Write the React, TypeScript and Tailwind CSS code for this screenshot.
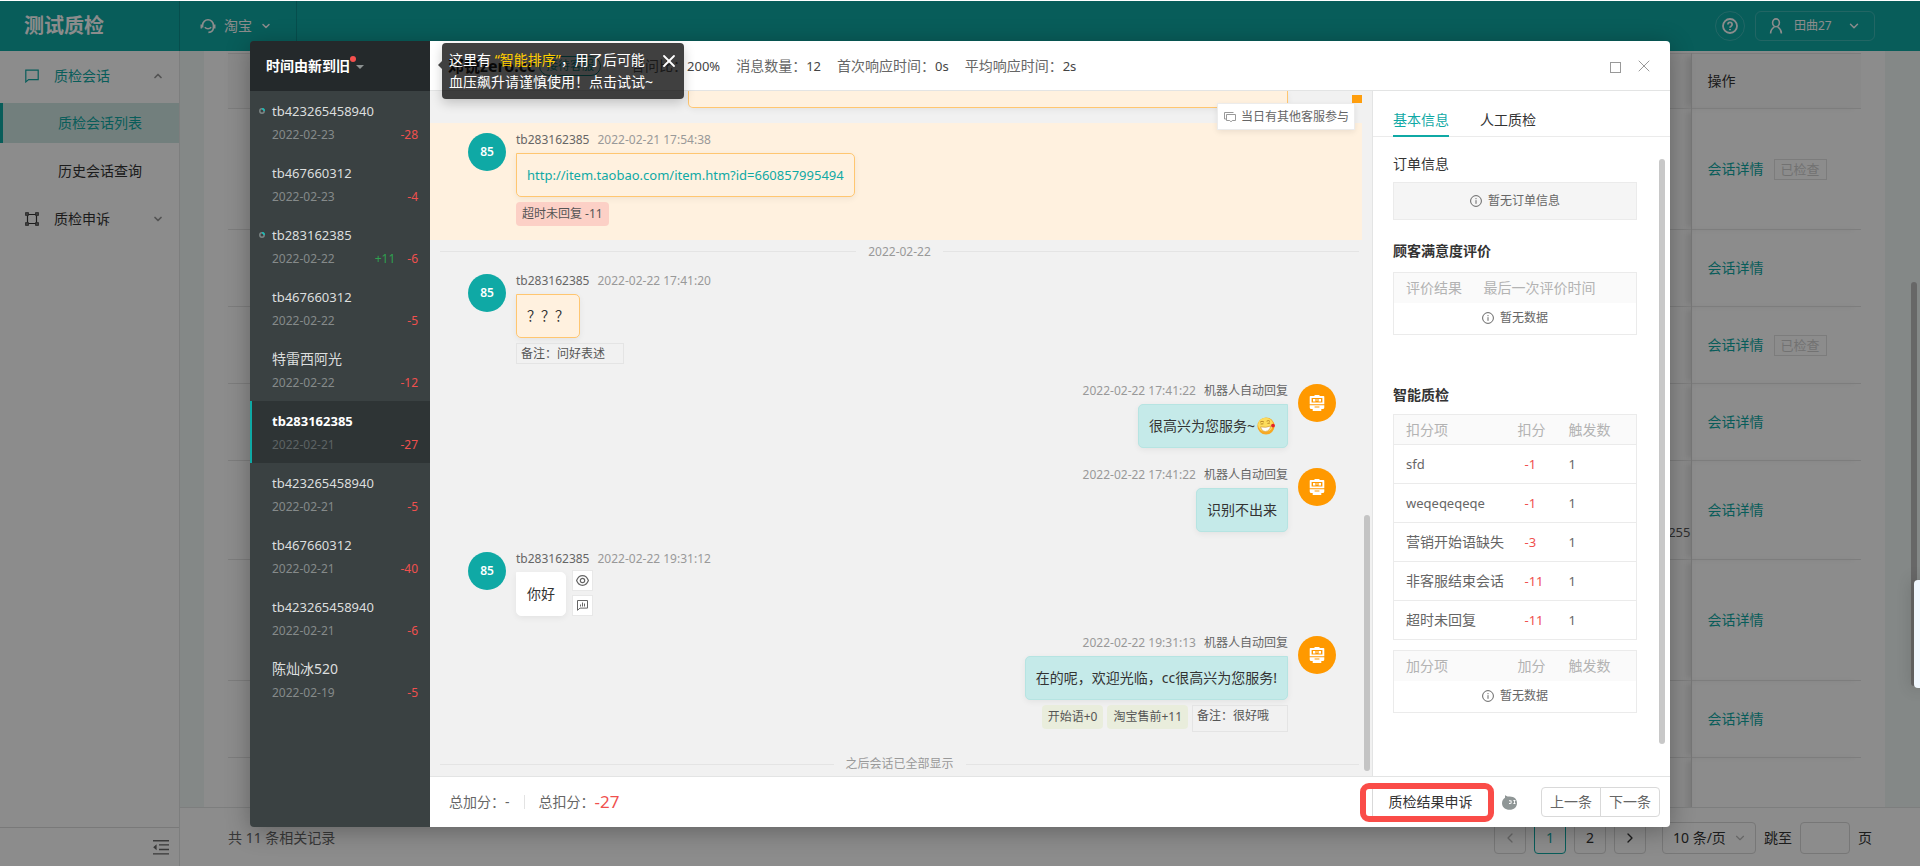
import React from "react";
import { ChevronDown, ChevronUp, ChevronLeft, ChevronRight, X } from "lucide-react";

type Session = { name: string; date: string; minus: string; plus?: string; dot?: boolean; active?: boolean };

const sessions: Session[] = [
  { name: "tb423265458940", date: "2022-02-23", minus: "-28", dot: true },
  { name: "tb467660312", date: "2022-02-23", minus: "-4" },
  { name: "tb283162385", date: "2022-02-22", minus: "-6", plus: "+11", dot: true },
  { name: "tb467660312", date: "2022-02-22", minus: "-5" },
  { name: "特雷西阿光", date: "2022-02-22", minus: "-12" },
  { name: "tb283162385", date: "2022-02-21", minus: "-27", active: true },
  { name: "tb423265458940", date: "2022-02-21", minus: "-5" },
  { name: "tb467660312", date: "2022-02-21", minus: "-40" },
  { name: "tb423265458940", date: "2022-02-21", minus: "-6" },
  { name: "陈灿冰520", date: "2022-02-19", minus: "-5" },
];

const rows = [
  { h: "h-[121px]", checked: true },
  { h: "h-[77px]" },
  { h: "h-[77px]", checked: true },
  { h: "h-[77px]" },
  { h: "h-[99px]", value: "255" },
  { h: "h-[121px]" },
  { h: "h-[77px]" },
  { h: "h-[77px]", empty: true },
];

const deductions = [
  ["sfd", "-1", "1"],
  ["weqeqeqeqe", "-1", "1"],
  ["营销开始语缺失", "-3", "1"],
  ["非客服结束会话", "-11", "1"],
  ["超时未回复", "-11", "1"],
];

function HeadsetIcon() {
  return (
    <svg className="size-4" viewBox="0 0 16 16" fill="none" stroke="currentColor" strokeWidth="1.6">
      <path d="M2.6 9.5V7.2a5.4 5.4 0 0 1 10.8 0v2.3c0 2.6-1.8 4.6-5 4.9" />
      <path d="M1.3 6.5v4M14.7 6.5v4M4.8 9.2c1.8 2 4.6 2 6.4 0" />
    </svg>
  );
}

function ChatIcon() {
  return (
    <svg className="size-[14px]" viewBox="0 0 14 14" fill="none" stroke="currentColor" strokeWidth="1.2">
      <path d="M.8 1.2h12.4v9.4H3.6L.8 12.9z" />
    </svg>
  );
}

function FrameIcon() {
  return (
    <svg className="size-[14px]" viewBox="0 0 14 14" fill="none" stroke="currentColor" strokeWidth="1.2">
      <path d="M2.5 3.5v7M11.5 3.5v7M3.5 2.5h7M3.5 11.5h7" />
      <path d="M.8.8h2.4v2.4H.8zM10.8.8h2.4v2.4h-2.4zM.8 10.8h2.4v2.4H.8zM10.8 10.8h2.4v2.4h-2.4z" />
    </svg>
  );
}

function HelpIcon() {
  return (
    <svg className="size-4" viewBox="0 0 16 16" fill="none" stroke="currentColor" strokeWidth="1.8">
      <circle cx="8" cy="8" r="7" />
      <path d="M5.9 6.4a2.1 2.1 0 1 1 3.2 1.8c-.8.5-1.1.8-1.1 1.5M8 10.9v1.4" />
    </svg>
  );
}

function UserIcon() {
  return (
    <svg className="h-4 w-[14px]" viewBox="0 0 14 16" fill="none" stroke="currentColor" strokeWidth="1.6">
      <ellipse cx="7" cy="4.8" rx="3.4" ry="3.9" />
      <path d="M1.6 15.4c0-3.4 1.6-5.2 3.8-6.6M12.4 15.4c0-3.4-1.6-5.2-3.8-6.6" />
    </svg>
  );
}

function CollapseIcon() {
  return (
    <svg className="h-[15px] w-4" viewBox="0 0 16 15" fill="currentColor">
      <path d="M0 0h16v1.4H0zM6 4.2h10v1.4H6zM6 8.8h10v1.4H6zM0 13.2h16v1.4H0zM3.6 4.2v6L.2 7.2z" />
    </svg>
  );
}

function InfoIcon() {
  return (
    <svg className="size-3" viewBox="0 0 12 12" fill="none" stroke="currentColor">
      <circle cx="6" cy="6" r="5.4" />
      <path d="M6 5.2v3.6M6 3.1v1.1" />
    </svg>
  );
}

function RobotIcon() {
  return (
    <svg className="h-4 w-4" viewBox="0 0 16 16" fill="#fff">
      <path d="M5.5 0h5v1h-5z" />
      <path fillRule="evenodd" d="M1.5 1h13a.8.8 0 0 1 .8.8v7.4H.7V1.8a.8.8 0 0 1 .8-.8zM2.6 3v4.6h10.8V3z" />
      <path d="M4 4h2.4v2.4H4zM9.6 4H12v2.4H9.6zM7.2 4.6h1.6v1H7.2z" />
      <path fillRule="evenodd" d="M.7 10.2h14.6v2.2a1.6 1.6 0 0 1-1.6 1.6h-1.4v2H3.7v-2H2.3a1.6 1.6 0 0 1-1.6-1.6zM5.6 11.4v1h4.8v-1z" />
    </svg>
  );
}

function LaughEmoji() {
  return (
    <svg className="mx-[2px] size-[18px]" viewBox="0 0 18 18">
      <circle cx="9" cy="9" r="8.6" fill="#f7a823" />
      <ellipse cx="8.6" cy="7.8" rx="7.6" ry="7" fill="#fcdc5c" />
      <path d="M3 5.2q2-1.8 4-.2M9.6 4.2q1.8-1.4 3.4.2M3.6 7l2.8-.2M10.4 6.4l2.6-.4" stroke="#a8721c" strokeWidth=".8" fill="none" />
      <path d="M3.6 9.8q5.4 1.4 10-.8-.6 5-5 5.4-3.8.2-5-4.6z" fill="#fff" stroke="#c98a2a" strokeWidth=".6" />
      <circle cx="16" cy="8.6" r="1.9" fill="#e2232b" />
    </svg>
  );
}

function TomatoIcon() {
  return (
    <svg className="size-[15px]" viewBox="0 0 15 15">
      <path d="M3 0c1.4 1.2 2.6 1.7 4.4 1.4C12 1.2 15 4 15 8c0 4-3 6.8-7.4 6.8S0 12 0 8.2C0 5.8 1.2 3.8 3 2.8z" fill="#8f9696" />
      <path d="M7 5.2h1.600v1H7zM7 8h1.600v1H7zM8.600 5.600h1v3h-1zM11.400 5h2v1h-2zM11.400 8h2v1h-2zM12 5.600h.9v3H12z" fill="#fff" />
    </svg>
  );
}

function StateRing() {
  return (
    <svg className="absolute -left-[13px] top-[8px] size-[6px]" viewBox="0 0 6 6" fill="none" strokeWidth="1.5">
      <circle cx="3" cy="3" r="2.2" stroke="#7c8585" />
      <path d="M3 .8A2.2 2.2 0 0 1 5.2 3" stroke="#14c0ba" />
    </svg>
  );
}

function ShellHeader() {
  return (
    <header className="flex h-[51px] shrink-0 items-stretch border-t border-white bg-[#0fa9a5] text-white">
      <h1 className="flex w-[180px] items-center border-r border-black/15 pl-6 text-[20px] font-bold">测试质检</h1>
      <button className="flex items-center gap-2 border-r border-black/15 pl-5 pr-6 text-sm">
        <HeadsetIcon />
        <span>淘宝</span>
        <ChevronDown className="size-3" strokeWidth={3} />
      </button>
      <div className="ml-auto flex items-center gap-[10px] pr-[45px]">
        <button aria-label="帮助" className="flex size-[30px] items-center justify-center rounded-full border border-white/20">
          <HelpIcon />
        </button>
        <button className="flex h-[30px] w-[120px] items-center rounded-md border border-white/20 px-[13px] text-xs">
          <UserIcon />
          <span className="ml-[11px]">田曲27</span>
          <ChevronDown className="ml-auto size-[14px]" strokeWidth={2.5} />
        </button>
      </div>
    </header>
  );
}

function ShellNav() {
  return (
    <aside className="flex w-[180px] shrink-0 flex-col border-r border-[#e3e6e6] bg-white text-sm">
      <nav className="flex-1">
        <a href="#chat" className="flex h-[50px] items-center pl-[25px] pr-[15px] text-[#0fa9a5]">
          <ChatIcon />
          <span className="ml-[15px] flex-1">质检会话</span>
          <ChevronUp className="size-3 text-[#999]" strokeWidth={3.5} />
        </a>
        <a href="#list" className="mt-[2px] flex h-10 items-center border-l-[3px] border-[#0fa9a5] bg-[#cfe8e4] pl-[55px] text-[#0fa9a5]">
          质检会话列表
        </a>
        <a href="#history" className="mt-2 flex h-10 items-center pl-[58px] text-[#333]">历史会话查询</a>
        <a href="#appeal" className="mt-[3px] flex h-[50px] items-center pl-[25px] pr-[15px] text-[#333]">
          <FrameIcon />
          <span className="ml-[15px] flex-1">质检申诉</span>
          <ChevronDown className="size-3 text-[#999]" strokeWidth={3.5} />
        </a>
      </nav>
      <button aria-label="收起菜单" className="flex h-[39px] items-center justify-end border-t border-[#dcdcdc] pr-[10px] text-[#666]">
        <CollapseIcon />
      </button>
    </aside>
  );
}

function ShellTable() {
  return (
    <div className="min-h-0 flex-1 overflow-hidden bg-[#f1f7f6] pl-6 pr-[35px]">
      <div className="h-full bg-white pl-6 pr-6 pt-[2px]">
        <table className="w-full table-fixed border-collapse text-sm">
          <thead>
            <tr className="h-[55px] border-y border-[#e4e4e4] bg-[#fafafa]">
              <th aria-label="内容" />
              <th className="w-[170px] border-l border-[#d8d8d8] pl-4 text-left font-normal text-[#333] shadow-[-6px_0_6px_-2px_rgba(0,0,0,0.12)]">操作</th>
            </tr>
          </thead>
          <tbody>
            {rows.map((r, i) => (
              <tr key={i} className={`${r.h} border-b border-[#e4e4e4]`}>
                <td className="pt-[44px] text-right text-[13px] text-[#555]">{r.value}</td>
                <td className="border-l border-[#d8d8d8] pl-4 shadow-[-6px_0_6px_-2px_rgba(0,0,0,0.12)]">
                  {!r.empty && (
                    <div className="flex items-center gap-[10px]">
                      <a href="#detail" className="text-[#0fa9a5]">会话详情</a>
                      {r.checked && (
                        <span className="flex h-[21px] w-[53px] items-center justify-center border border-[#e2e2e2] text-[13px] text-[#d0d0d0]">已检查</span>
                      )}
                    </div>
                  )}
                </td>
              </tr>
            ))}
          </tbody>
        </table>
      </div>
    </div>
  );
}

function ShellFooter() {
  const box = "flex size-8 items-center justify-center rounded-sm border";
  return (
    <footer className="flex h-[59px] shrink-0 items-center border-t border-[#e3e6e6] bg-white pl-12 pr-[48px] pt-[2px] text-sm text-[#333]">
      <span className="text-[#666]">共 11 条相关记录</span>
      <div className="ml-auto flex items-center gap-2">
        <button aria-label="上一页" className={`${box} border-[#d9d9d9] text-[#bbb]`}><ChevronLeft className="size-4" strokeWidth={2} /></button>
        <button className={`${box} border-[#0fa9a5] text-[#0fa9a5]`}>1</button>
        <button className={`${box} border-[#d9d9d9]`}>2</button>
        <button aria-label="下一页" className={`${box} border-[#d9d9d9]`}><ChevronRight className="size-4" strokeWidth={2} /></button>
        <span className="relative ml-2">
          <select aria-label="每页条数" className="h-8 w-[94px] appearance-none rounded-sm border border-[#d9d9d9] bg-white pl-[10px]">
            <option>10 条/页</option>
          </select>
          <ChevronDown className="absolute right-[9px] top-[9px] size-[14px] text-[#bbb]" />
        </span>
        <label className="flex items-center gap-2">
          跳至
          <input className="h-8 w-[50px] rounded-sm border border-[#d9d9d9] bg-white" />
          <span>页</span>
        </label>
      </div>
    </footer>
  );
}

function SessionList() {
  return (
    <section className="w-[180px] shrink-0 bg-[#3a4142]">
      <button className="relative flex h-[50px] w-full items-center bg-[#24292b] pl-4 text-sm font-bold text-white">
        时间由新到旧
        <span className="absolute left-[100px] top-[15px] size-[6px] rounded-full bg-[#f5504e]" />
        <span className="ml-[6px] mt-px border-x-4 border-t-4 border-x-transparent border-t-[#8c9191]" />
      </button>
      <ul>
        {sessions.map((s, i) => (
          <li
            key={i}
            className={
              s.active
                ? "h-[62px] border-l-2 border-[#0fa9a5] bg-[#2e3435] pl-5 pr-3 pt-[9px]"
                : "h-[62px] pl-[22px] pr-3 pt-[9px]"
            }
          >
            <div
              className={`relative leading-[22px] ${s.name.startsWith("tb") ? "text-[13px]" : "text-sm"} ${s.active ? "font-bold text-white" : "text-[#dcdede]"}`}
            >
              {s.dot && <StateRing />}
              {s.name}
            </div>
            <div className="mt-1 flex gap-3 text-xs leading-[18px]">
              <span className={`flex-1 ${s.active ? "text-[#5d6364]" : "text-[#858a8a]"}`}>{s.date}</span>
              {s.plus && <span className="text-[#2fa04f]">{s.plus}</span>}
              <span className="text-[#f0504e]">{s.minus}</span>
            </div>
          </li>
        ))}
      </ul>
    </section>
  );
}

function DialogHeader() {
  return (
    <div className="relative flex h-[50px] shrink-0 items-center border-b border-[#e3e4e4] bg-white pl-[18px] pr-4 text-sm text-[#666]">
      <h2 className="w-[91px] text-base font-bold text-[#222]">邓锐zero.cc</h2>
      <span className="flex h-[20px] items-center rounded-full border border-[#0fa9a5] px-[6px] text-xs text-[#0fa9a5]">接待客服</span>
      <dl className="ml-[30px] flex gap-4">
        {[["答问比：", "200%"], ["消息数量：", "12"], ["首次响应时间：", "0s"], ["平均响应时间：", "2s"]].map(([k, v]) => (
          <div key={k} className="flex">
            <dt>{k}</dt>
            <dd className="text-[13px] leading-5 text-[#444]">{v}</dd>
          </div>
        ))}
      </dl>
      <div className="ml-auto flex items-center gap-[13px] text-[#999]">
        <button aria-label="最大化" className="mt-[3px] size-[11px] border border-[#999]" />
        <button aria-label="关闭"><X className="size-5" strokeWidth={1.2} /></button>
      </div>
      <div role="tooltip" className="absolute left-3 top-[2px] z-10 flex h-14 w-[242px] items-start rounded-sm bg-black/75 px-[7px] pt-[6px] text-sm leading-[22px] text-white shadow-[0_4px_12px_rgba(0,0,0,0.2)]">
        <span className="absolute -left-1 top-[18px] border-y-4 border-r-4 border-y-transparent border-r-[#404040]" />
        <p className="whitespace-nowrap">
          这里有 <span className="text-[#ffcc00]">“智能排序”</span>，用了后可能
          <br />
          血压飙升请谨慎使用！点击试试~
        </p>
        <button aria-label="关闭提示" className="absolute right-[5px] top-[8px]"><X className="size-5" strokeWidth={2.2} /></button>
      </div>
    </div>
  );
}

type MessageProps = {
  right?: boolean;
  time: string;
  tone: "warn" | "plain" | "robot";
  children: React.ReactNode;
  side?: React.ReactNode;
  tags?: React.ReactNode;
};

const tones = {
  warn: "rounded-tl-none border-[#ffc670] bg-[#fff1df]",
  plain: "rounded-tl-none border-white bg-white",
  robot: "rounded-tr-none border-[#b6e4e2] bg-[#c5eae9]",
};

function Message({ right, time, tone, children, side, tags }: MessageProps) {
  return (
    <article className={right ? "flex flex-row-reverse gap-[10px] pr-[26px]" : "flex gap-[10px] pl-[38px]"}>
      <div className={`flex size-[38px] shrink-0 items-center justify-center rounded-full text-xs font-semibold text-white ${right ? "bg-[#ff9900]" : "bg-[#0fa9a5]"}`}>
        {right ? <RobotIcon /> : "85"}
      </div>
      <div className={right ? "flex flex-col items-end" : "flex flex-col items-start"}>
        <div className={`flex h-5 gap-2 text-xs leading-[14px] text-[#666] ${right ? "flex-row-reverse" : ""}`}>
          <span>{right ? "机器人自动回复" : "tb283162385"}</span>
          <time className="text-[#999]">{time}</time>
        </div>
        <div className="flex h-11 gap-[6px]">
          <div className={`flex h-11 items-center rounded-[5px] border px-[10px] text-sm text-[#333] shadow-[0_2px_6px_rgba(0,0,0,0.06)] ${tones[tone]}`}>
            {children}
          </div>
          {side}
        </div>
        {tags && <div className="mt-[5px] flex gap-1 text-xs text-[#555]">{tags}</div>}
      </div>
    </article>
  );
}

function Divider({ children }: { children: React.ReactNode }) {
  return (
    <div className="flex h-6 items-center gap-3 pl-[10px] pr-[3px] text-xs text-[#999]">
      <span className="h-px flex-1 bg-[#e4e4e4]" />
      {children}
      <span className="h-px flex-1 bg-[#e4e4e4]" />
    </div>
  );
}

function ChatPane() {
  const tool = "flex size-[21px] items-center justify-center border border-[#e8e8e8] bg-white text-[#666]";
  return (
    <section className="relative flex min-w-0 flex-1 flex-col overflow-hidden bg-[#f1f1f1] pr-[10px]">
      <div className="ml-[258px] mr-[74px] h-[17px] shrink-0 rounded-b-[5px] border border-t-0 border-[#ffc670] bg-[#fff1df] shadow-[0_2px_6px_rgba(0,0,0,0.06)]" />
      <div className="mt-[15px] bg-[#fff1df] pb-[14px] pt-[10px]">
        <Message
          time="2022-02-21 17:54:38"
          tone="warn"
          tags={<span className="flex h-6 items-center rounded-sm bg-[#fcd0c6] px-[6px]">超时未回复 -11</span>}
        >
          <a href="#item" className="text-[13px] text-[#0fa9a5]">http://item.taobao.com/item.htm?id=660857995494</a>
        </Message>
      </div>
      <Divider>2022-02-22</Divider>
      <div className="flex flex-col gap-5 pb-[21px] pt-[10px]">
        <Message
          time="2022-02-22 17:41:20"
          tone="warn"
          tags={<span className="h-[21px] w-[108px] border border-[#e4e4e4] pl-1 leading-5">备注：问好表述</span>}
        >
          ？？？
        </Message>
        <Message right time="2022-02-22 17:41:22" tone="robot">
          <span>很高兴为您服务~</span>
          <LaughEmoji />
        </Message>
        <Message right time="2022-02-22 17:41:22" tone="robot">识别不出来</Message>
        <Message
          time="2022-02-22 19:31:12"
          tone="plain"
          side={
            <div className="-mt-[2px] flex flex-col gap-1">
              <button aria-label="查看" className={tool}>
                <svg className="h-[11px] w-[13px]" viewBox="0 0 13 11" fill="none" stroke="currentColor" strokeWidth="1.2">
                  <path d="M.6 5.5C2 2 4 .7 6.5.7S11 2 12.4 5.5C11 9 9 10.3 6.5 10.3S2 9 .6 5.5z" />
                  <circle cx="6.5" cy="5.5" r="2.2" />
                </svg>
              </button>
              <button aria-label="备注" className={tool}>
                <svg className="h-[11px] w-[11px]" viewBox="0 0 11 11" fill="none" stroke="currentColor">
                  <path d="M.5.5h10v7.600H3L.5 10.300zM3.500 4.500v2M5.500 2.500v4M7.500 3.500v3" />
                </svg>
              </button>
            </div>
          }
        >
          你好
        </Message>
        <Message
          right
          time="2022-02-22 19:31:13"
          tone="robot"
          tags={
            <>
              <span className="flex h-6 items-center rounded-sm bg-[#e9eddc] px-[6px]">开始语+0</span>
              <span className="flex h-6 items-center rounded-sm bg-[#e9eddc] px-[6px]">淘宝售前+11</span>
              <span className="h-[27px] w-24 border border-[#e4e4e4] pl-1 leading-5">备注：很好哦</span>
            </>
          }
        >
          在的呢，欢迎光临，cc很高兴为您服务!
        </Message>
      </div>
      <Divider>之后会话已全部显示</Divider>
      <span className="absolute right-[10px] top-1 h-2 w-[10px] bg-[#ff9e0d]" />
      <button className="absolute right-[17px] top-[12px] flex h-[27px] items-center gap-[5px] border border-[#ececec] bg-white pl-[6px] pr-[5px] text-xs text-[#666] shadow-[0_2px_6px_rgba(0,0,0,0.08)]">
        <svg className="size-3" viewBox="0 0 12 12" fill="none" stroke="#999">
          <path d="M2.5 8H.5V1.5h9" />
          <path d="M2.5 3.5h9V9.5H8.2L7 10.9 5.8 9.5H2.5z" />
        </svg>
        当日有其他客服参与
      </button>
      <span className="absolute bottom-[5px] right-[2px] h-64 w-[6px] rounded-full bg-[#c4c4c4]" />
    </section>
  );
}

const th = "h-[30px] pl-3 text-left font-normal";

function EmptyRow() {
  return (
    <tr>
      <td colSpan={3} className="h-8">
        <div className="flex items-center justify-center gap-[6px] text-xs"><InfoIcon />暂无数据</div>
      </td>
    </tr>
  );
}

function InfoPane() {
  const table = "w-full table-fixed border-collapse border border-[#ebebeb] text-sm leading-5 text-[#666]";
  const head = "bg-[#fafafa] text-[#b3b3b3]";
  return (
    <section className="relative flex w-[298px] shrink-0 flex-col border-l border-[#e3e4e4] bg-white text-sm text-[#333]">
      <div role="tablist" className="flex h-[46px] shrink-0 items-stretch gap-[31px] border-b border-[#ebebeb] pl-5 pt-[14px]">
        <button role="tab" aria-selected="true" className="-mb-px border-b-2 border-[#0fa9a5] text-[#0fa9a5]">基本信息</button>
        <button role="tab" aria-selected="false" className="-mb-px border-b-2 border-transparent">人工质检</button>
      </div>
      <div className="flex flex-col pl-5 pr-[33px] leading-5">
        <h3 className="mt-[17px]">订单信息</h3>
        <div className="mt-2 flex h-[38px] items-center justify-center gap-[6px] border border-[#ebebeb] bg-[#f5f5f5] text-xs text-[#666]">
          <InfoIcon />暂无订单信息
        </div>
        <h3 className="mt-[21px] font-bold">顾客满意度评价</h3>
        <table className={`${table} mt-[11px]`}>
          <thead>
            <tr className={head}><th className="h-[30px] w-[78px] pl-3 text-left font-normal">评价结果</th><th className={th} colSpan={2}>最后一次评价时间</th></tr>
          </thead>
          <tbody><EmptyRow /></tbody>
        </table>
        <h3 className="mt-[50px] font-bold">智能质检</h3>
        <table className={`${table} mt-[9px]`}>
          <thead>
            <tr className={head}>
              <th className={th}>扣分项</th>
              <th className="w-[50px] font-normal">扣分</th>
              <th className="w-[80px] pl-3 text-left font-normal">触发数</th>
            </tr>
          </thead>
          <tbody>
            {deductions.map(([a, b, c]) => (
              <tr key={a} className="h-[39px] border-t border-[#ebebeb]">
                <td className={`whitespace-nowrap pl-3 ${/^[a-z]/.test(a) ? "text-[13px]" : ""}`}>{a}</td>
                <td className="pl-[18px] text-[13px] text-[#f0504e]">{b}</td>
                <td className="pl-3 text-[13px]">{c}</td>
              </tr>
            ))}
          </tbody>
        </table>
        <table className={`${table} mt-[10px]`}>
          <thead>
            <tr className={head}>
              <th className={th}>加分项</th>
              <th className="w-[50px] font-normal">加分</th>
              <th className="w-[80px] pl-3 text-left font-normal">触发数</th>
            </tr>
          </thead>
          <tbody><EmptyRow /></tbody>
        </table>
      </div>
      <span className="absolute bottom-8 right-[5px] top-[68px] w-[6px] rounded-full bg-[#c8c8c8]" />
    </section>
  );
}

function DialogFooter() {
  return (
    <div className="flex h-[51px] shrink-0 items-center border-t border-[#e3e4e4] bg-white pl-[19px] pr-[10px] text-sm text-[#666]">
      <span>总加分：-</span>
      <span className="mx-[14px] h-[14px] w-px bg-[#e3e3e3]" />
      <span className="flex items-center">总扣分：<b className="text-[17px] font-normal text-[#f0504e]">-27</b></span>
      <div className="relative ml-auto flex w-[121px] items-center">
        <button className="h-[30px] w-[116px] border-l border-[#d9d9d9] text-[#333]">质检结果申诉</button>
        <span className="absolute -left-3 -top-1 h-[39px] w-[134px] rounded-[9px] border-[6px] border-[#fa4c48]" />
      </div>
      <span className="ml-[9px] mr-6"><TomatoIcon /></span>
      <button className="h-[30px] w-[60px] rounded-l-sm border border-[#d9d9d9]">上一条</button>
      <button className="-ml-px h-[30px] w-[60px] rounded-r-sm border border-[#d9d9d9]">下一条</button>
    </div>
  );
}

export default function App() {
  return (
    <div className="relative flex h-screen flex-col overflow-hidden bg-white font-['Noto_Sans','Noto_Sans_CJK_SC',sans-serif]">
      <ShellHeader />
      <div className="flex min-h-0 flex-1">
        <ShellNav />
        <main className="flex min-w-0 flex-1 flex-col">
          <ShellTable />
          <ShellFooter />
        </main>
      </div>
      <span className="absolute right-[3px] top-[282px] h-[404px] w-[6px] rounded-full bg-[#bcbcbc]" />
      <div className="absolute inset-0 mt-px bg-black/45 px-[250px] pb-[39px] pt-10">
        <div role="dialog" aria-label="会话详情" className="flex h-full overflow-hidden rounded-sm shadow-[0_4px_24px_rgba(0,0,0,0.3)]">
          <SessionList />
          <div className="flex min-w-0 flex-1 flex-col">
            <DialogHeader />
            <div className="flex min-h-0 flex-1">
              <ChatPane />
              <InfoPane />
            </div>
            <DialogFooter />
          </div>
        </div>
      </div>
      <span className="absolute right-0 top-[580px] h-[108px] w-[6px] rounded-l-sm bg-[#f0f8ff] shadow-[0_0_16px_rgba(0,0,0,0.3)]" />
    </div>
  );
}
